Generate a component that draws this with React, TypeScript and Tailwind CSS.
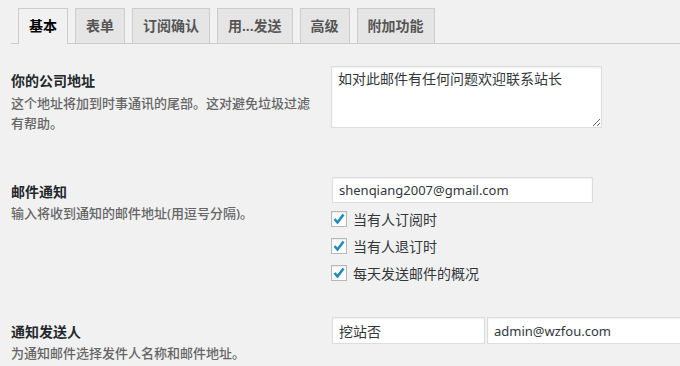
import React from "react";

const font = { fontFamily: '"Noto Sans", "Noto Sans CJK SC", sans-serif' };

function Tab({ label, active }: { label: string; active?: boolean }) {
  return (
    <div
      className={
        "px-[10px] border border-b-0 border-[#ccc] text-[14px] font-semibold leading-[24px] pt-[5px] " +
        (active ? "h-[36px] bg-[#f1f1f1] text-black" : "h-[35px] bg-[#e5e5e5] text-[#555]")
      }
    >
      {label}
    </div>
  );
}

function Check({ label }: { label: string }) {
  return (
    <div className="h-[27px] flex items-center">
      <div className="w-[16px] h-[16px] border border-[#b4b9be] bg-white flex items-center justify-center shadow-[inset_0_1px_2px_rgba(0,0,0,0.1)]">
        <svg width="14" height="14" viewBox="0 0 14 14">
          <path d="M2.5 7 L5.5 10.5 L11.5 2.5" fill="none" stroke="#1e8cbe" strokeWidth="2.6" strokeLinecap="butt" strokeLinejoin="miter" />
        </svg>
      </div>
      <span className="ml-[6px] text-[14px] leading-[20px] text-[#32373c] pt-[3px]">{label}</span>
    </div>
  );
}

const inputCls =
  "bg-white border border-[#ddd] shadow-[inset_0_1px_2px_rgba(0,0,0,0.07)] text-[#32373c] px-[6px] outline-none";

const descCls = "text-[13px] leading-[20px] text-[#666] font-medium";

export default function App() {
  return (
    <div className="w-[680px] h-[366px] overflow-hidden bg-[#f1f1f1]" style={font}>
      <div className="pt-[8px]">
        <div className="ml-[11px] h-[36px] border-b border-[#ccc] flex items-start gap-[7px] pl-[7px]">
          <Tab label="基本" active />
          <Tab label="表单" />
          <Tab label="订阅确认" />
          <Tab label="用...发送" />
          <Tab label="高级" />
          <Tab label="附加功能" />
        </div>
      </div>

      <div className="flex mt-[22px]">
        <div className="w-[331px] shrink-0 pl-[11px] pt-[5px]">
          <div className="text-[14px] font-semibold leading-[20px] text-[#23282d]">你的公司地址</div>
          <div className={descCls + " w-[308px] mt-[2px]"}>
            这个地址将加到时事通讯的尾部。这对避免垃圾过滤有帮助。
          </div>
        </div>
        <textarea
          className={inputCls + " w-[271px] h-[62px] text-[14px] leading-[20px] pt-[2px] resize-y block"}
          defaultValue="如对此邮件有任何问题欢迎联系站长"
        />
      </div>

      <div className="flex mt-[44px]">
        <div className="w-[331px] shrink-0 pl-[11px] pt-[5px]">
          <div className="text-[14px] font-semibold leading-[20px] text-[#23282d]">邮件通知</div>
          <div className={descCls + " mt-[1px]"}>输入将收到通知的邮件地址(用逗号分隔)。</div>
        </div>
        <div className="flex flex-col">
          <input
            className={inputCls + " ml-px w-[261px] h-[26px] text-[13px]"}
            defaultValue="shenqiang2007@gmail.com"
          />
          <div className="mt-[2px]">
            <Check label="当有人订阅时" />
            <Check label="当有人退订时" />
            <Check label="每天发送邮件的概况" />
          </div>
        </div>
      </div>

      <div className="flex mt-[31px]">
        <div className="w-[331px] shrink-0 pl-[11px] pt-[5px]">
          <div className="text-[14px] font-semibold leading-[20px] text-[#23282d]">通知发送人</div>
          <div className={descCls + " mt-[1px]"}>为通知邮件选择发件人名称和邮件地址。</div>
        </div>
        <div className="flex shrink-0">
          <input className={inputCls + " ml-px w-[153px] h-[27px] text-[14px]"} defaultValue="挖站否" />
          <input className={inputCls + " ml-[2px] w-[200px] h-[27px] text-[13px]"} defaultValue="admin@wzfou.com" />
        </div>
      </div>
    </div>
  );
}
